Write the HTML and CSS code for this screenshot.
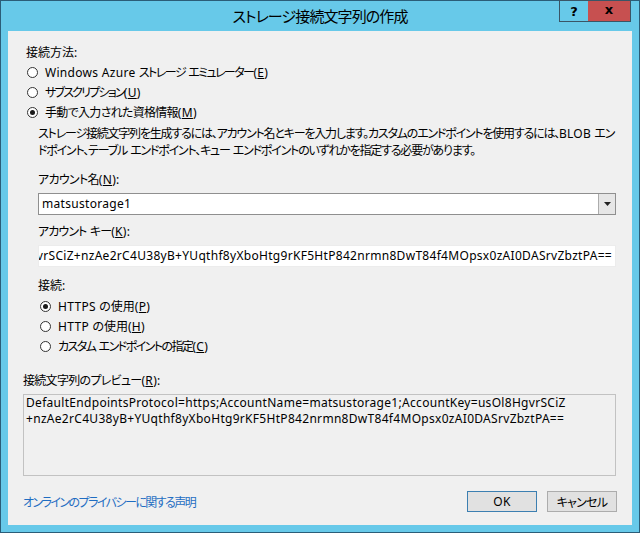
FILE: index.html
```html
<!DOCTYPE html>
<html lang="ja">
<head>
<meta charset="utf-8">
<title>ストレージ接続文字列の作成</title>
<link rel="stylesheet" href="styles.css">
</head>
<body>
<div class="window">
  <div class="titlebar">
    <div class="spacer"></div>
    <div class="title">ストレージ接続文字列の作成</div>
    <div class="caption">
      <div class="cap-btn help">?</div>
      <div class="cap-btn close">x</div>
    </div>
  </div>
  <div class="client">
    <div class="group1">
      <div class="label">接続方法:</div>
      <div class="radio"><span class="circle"></span><span class="ls-kana"><span class="en">Windows Azure </span>ストレージ エミュレーター<span class="en">(<u>E</u>)</span></span></div>
      <div class="radio"><span class="circle"></span><span class="ls-kana2">サブスクリプション<span class="en">(<u>U</u>)</span></span></div>
      <div class="radio"><span class="circle checked"></span><span class="ls-mix">手動で入力された資格情報<span class="en">(<u>M</u>)</span></span></div>
    </div>
    <div class="manual">
      <p class="desc">ストレージ接続文字列を生成するには、アカウント名とキーを入力します。カスタムのエンドポイントを使用するには、<span class="en">BLOB </span>エン<br>ドポイント、テーブル エンドポイント、キュー エンドポイントのいずれかを指定する必要があります。</p>
      <div class="label ls-mix gap-lg">アカウント名<span class="en">(<u>N</u>):</span></div>
      <div class="combo">
        <span class="combo-text en">matsustorage1</span>
        <span class="combo-btn"><svg width="7" height="4" viewBox="0 0 7 4"><path d="M0 0H7L3.5 4Z" fill="#222"/></svg></span>
      </div>
      <div class="label ls-mix2 gap-md">アカウント キー<span class="en">(<u>K</u>):</span></div>
      <div class="textbox"><span class="key en">usOl8HgvrSCiZ+nzAe2rC4U38yB+YUqthf8yXboHtg9rKF5HtP842nrmn8DwT84f4MOpsx0zAI0DASrvZbztPA==</span></div>
      <div class="label gap-conn">接続:</div>
      <div class="radios2">
        <div class="radio"><span class="circle checked"></span><span><span class="en">HTTPS </span>の使用<span class="en">(<u>P</u>)</span></span></div>
        <div class="radio"><span class="circle"></span><span><span class="en">HTTP </span>の使用<span class="en">(<u>H</u>)</span></span></div>
        <div class="radio"><span class="circle"></span><span class="ls-kana">カスタム エンドポイントの指定<span class="en">(<u>C</u>)</span></span></div>
      </div>
    </div>
    <div class="label ls-mix gap-prev">接続文字列のプレビュー<span class="en">(<u>R</u>):</span></div>
    <div class="preview en">DefaultEndpointsProtocol=https;AccountName=matsustorage1;AccountKey=usOl8HgvrSCiZ<br>+nzAe2rC4U38yB+YUqthf8yXboHtg9rKF5HtP842nrmn8DwT84f4MOpsx0zAI0DASrvZbztPA==</div>
    <div class="footer">
      <a class="link ls-kana" href="#">オンラインのプライバシーに関する声明</a>
      <div class="buttons">
        <div class="btn default en">OK</div>
        <div class="btn ls-mix">キャンセル</div>
      </div>
    </div>
  </div>
</div>
</body>
</html>
```
FILE: styles.css
```css
* { box-sizing: border-box; }
html, body { margin: 0; padding: 0; }
body {
  font-family: "Noto Sans", "Noto Sans CJK JP", sans-serif;
  font-size: 12px;
  color: #000;
  font-feature-settings: "palt";
  background: #67c9e9;
}
.en { letter-spacing: 0.3px; word-spacing: 0; }
.ls-mix { letter-spacing: -0.7px; word-spacing: 0.7px; }
.ls-mix2 { letter-spacing: -0.9px; word-spacing: 1.2px; }
.ls-kana { letter-spacing: -1.55px; word-spacing: 1.6px; }
.ls-kana2 { letter-spacing: -1.8px; }
.window {
  width: 640px;
  height: 533px;
  border: 1px solid #2b5d78;
  background: #67c9e9;
  display: flex;
  flex-direction: column;
}
.titlebar {
  height: 30px;
  display: grid;
  grid-template-columns: 1fr auto 1fr;
  align-items: start;
}
.title {
  font-size: 15px;
  line-height: 30px;
  letter-spacing: -0.9px;
  align-self: center;
  white-space: nowrap;
}
.caption {
  justify-self: end;
  display: flex;
  margin-right: 8px;
  margin-top: -1px;
}
.cap-btn {
  height: 22px;
  display: flex;
  align-items: center;
  justify-content: center;
  font-family: "DejaVu Sans", sans-serif;
  font-weight: bold;
  font-size: 13px;
  border-bottom: 1px solid #3a5566;
}
.help {
  width: 29px;
  border-left: 1px solid #3a5566;
  border-top: 1px solid #3a5566;
}
.close {
  width: 43px;
  background: #c75050;
  border-top: 1px solid #3a5566;
  border-right: 1px solid #3a5566;
  padding-bottom: 3px;
}
.client {
  flex: 1;
  margin: 0 7px 7px;
  background: #f0f0f0;
  padding: 13px 16px 0 15px;
  display: flex;
  flex-direction: column;
}
.label {
  line-height: 18px;
  white-space: nowrap;
}
.group1 { padding-left: 3px; }
.group1 .circle { margin-left: 1px; }
.radio {
  height: 20px;
  display: flex;
  align-items: center;
  white-space: nowrap;
}
.circle {
  width: 11px;
  height: 11px;
  border: 1px solid #333;
  border-radius: 50%;
  background: #fff;
  margin-right: 7px;
  display: flex;
  align-items: center;
  justify-content: center;
  flex: none;
}
.circle.checked::after {
  content: "";
  width: 5px;
  height: 5px;
  border-radius: 50%;
  background: #1a1a1a;
}
.manual { padding-left: 15px; display: flex; flex-direction: column; }
.desc {
  margin: 3px 0 0;
  line-height: 17px;
  letter-spacing: -1.2px;
  word-spacing: 1.2px;
  white-space: nowrap;
}
.desc .en { letter-spacing: 0.2px; }
.gap-lg { margin-top: 12px; }
.gap-md { margin-top: 8px; }
.gap-conn { margin-top: 10px; }
.gap-prev { margin-top: 16px; }
.combo {
  margin-top: 4px;
  height: 22px;
  border: 1px solid #8f8f8f;
  background: #fff;
  display: flex;
}
.combo-text {
  flex: 1;
  padding-left: 3px;
  line-height: 20px;
}
.combo-btn {
  width: 17px;
  border-left: 1px solid #acacac;
  background: #e6e6e6;
  display: flex;
  align-items: center;
  justify-content: center;
}
.textbox {
  margin-top: 4px;
  height: 22px;
  border: 1px solid #ececec;
  background: #fff;
  display: flex;
  justify-content: flex-end;
  overflow: hidden;
  padding-right: 3px;
}
.key {
  white-space: nowrap;
  line-height: 20px;
  flex: none;
}
.radios2 { margin-top: 1px; }
.radios2 .circle { margin-left: 2px; }
.preview {
  margin-top: 4px;
  height: 82px;
  border: 1px solid #c2c2c2;
  padding: 0 2px;
  line-height: 16px;
  white-space: nowrap;
  overflow: hidden;
}
.footer {
  margin-top: 15px;
  margin-right: -1px;
  height: 21px;
  display: flex;
  align-items: center;
  justify-content: space-between;
}
.link {
  color: #1f6dc2;
  text-decoration: none;
}
.buttons { display: flex; gap: 10px; }
.btn {
  width: 70px;
  height: 21px;
  border: 1px solid #acacac;
  background: #e1e1e1;
  display: flex;
  align-items: center;
  justify-content: center;
  font-size: 12px;
}
.btn.default { border-color: #3c7fb1; }
```
